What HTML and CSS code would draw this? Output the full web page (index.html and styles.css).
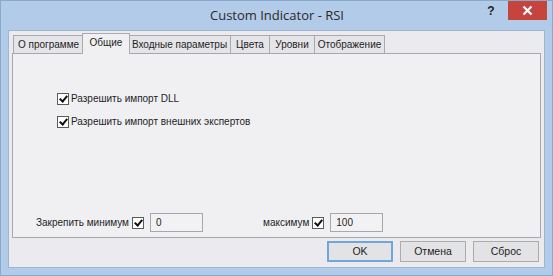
FILE: index.html
```html
<!DOCTYPE html>
<html>
<head>
<meta charset="utf-8">
<link rel="stylesheet" href="styles.css">
</head>
<body>
<div class="window">
  <div class="titlebar">
    <div class="title">Custom Indicator - RSI</div>
    <div class="help">?</div>
    <svg class="close" width="39" height="19" viewBox="0 0 39 19"><rect x="0" y="0" width="39" height="19" fill="#c7433e"/><path d="M15.5 5.5L23.5 13.5M23.5 5.5L15.5 13.5" stroke="#ffffff" stroke-width="2.2"/></svg>
  </div>
  <div class="client">
    <div class="tabs">
      <div class="tab w1">О программе</div>
      <div class="tab active w2">Общие</div>
      <div class="tab w3">Входные параметры</div>
      <div class="tab w4">Цвета</div>
      <div class="tab w5">Уровни</div>
      <div class="tab w6">Отображение</div>
    </div>
    <div class="panel">
      <div class="checks">
        <label class="check"><span class="box checked"></span>Разрешить импорт DLL</label>
        <label class="check"><span class="box checked"></span>Разрешить импорт внешних экспертов</label>
      </div>
      <div class="limits">
        <div class="limit">
          <span class="lbl">Закрепить минимум</span>
          <span class="box checked"></span>
          <span class="field">0</span>
        </div>
        <div class="limit limit-max">
          <span class="lbl">максимум</span>
          <span class="box checked"></span>
          <span class="field">100</span>
        </div>
      </div>
    </div>
    <div class="buttons">
      <div class="btn default">OK</div>
      <div class="btn">Отмена</div>
      <div class="btn">Сброс</div>
    </div>
  </div>
</div>
</body>
</html>
```

FILE: styles.css
```css
html, body {
  margin: 0;
  padding: 0;
}
body {
  width: 553px;
  height: 276px;
  overflow: hidden;
  font-family: "Liberation Sans", Arial, sans-serif;
  font-size: 10px;
  color: #1e1e1e;
}
.window {
  width: 553px;
  height: 276px;
  box-sizing: border-box;
  background: #b2cbe8;
  border: 1px solid #8aa8cc;
  display: flex;
  flex-direction: column;
}
.titlebar {
  height: 29px;
  display: flex;
  align-items: flex-start;
}
.title {
  flex: 1;
  text-align: center;
  font-family: "Open Sans", "Noto Sans", sans-serif;
  font-size: 13px;
  line-height: 29px;
  color: #2a2a2a;
  padding-left: 72px;
}
.help {
  width: 20px;
  margin-top: 3px;
  font-family: "Liberation Sans", Arial, sans-serif;
  font-weight: bold;
  font-size: 12px;
  color: #222;
  text-align: center;
  margin-right: 7px;
}
.close {
  display: block;
  flex: none;
  margin-right: 5px;
}
.client {
  flex: 1;
  margin: 0 7px 7px 7px;
  background: #ebebef;
  border: 1px solid #9fb6d2;
  display: flex;
  flex-direction: column;
  padding: 3px 3px 0 3px;
}
.tabs {
  display: flex;
  align-items: flex-end;
  height: 19px;
  padding-left: 1px;
  position: relative;
  z-index: 1;
}
.tab {
  height: 18px;
  line-height: 17px;
  box-sizing: border-box;
  border: 1px solid #aaaaae;
  border-bottom: none;
  background: #e4e4e9;
  text-align: center;
  margin-right: -1px;
  white-space: nowrap;
}
.tab.active {
  height: 21px;
  line-height: 18px;
  background: #f0f0f3;
  margin-bottom: -1px;
  margin-left: -1px;
  margin-right: -2px;
  position: relative;
  z-index: 2;
}
.w1 { width: 71px; }
.w2 { width: 48px; }
.w3 { width: 103px; }
.w4 { width: 40px; }
.w5 { width: 46px; }
.w6 { width: 71px; }
.panel {
  height: 185px;
  box-sizing: border-box;
  border: 1px solid #a9a9ad;
  background: #f0f0f3;
  display: flex;
  flex-direction: column;
  justify-content: space-between;
  padding: 38px 0 5px 23px;
}
.checks {
  display: flex;
  flex-direction: column;
  gap: 10px;
  padding-left: 21px;
}
.check {
  display: flex;
  align-items: center;
  gap: 2px;
  height: 13px;
}
.box {
  width: 12px;
  height: 12px;
  box-sizing: border-box;
  border: 1px solid #5a5a5a;
  background: #fff;
  position: relative;
  flex: none;
}
.box.checked::after {
  content: "";
  position: absolute;
  left: 3px;
  top: 0px;
  width: 3px;
  height: 6px;
  border: solid #111;
  border-width: 0 2px 2px 0;
  transform: rotate(40deg);
}
.limits {
  display: flex;
  align-items: center;
}
.limit {
  display: flex;
  align-items: center;
  gap: 3px;
}
.limit .field {
  margin-left: 3px;
  width: 53px;
  height: 19px;
  box-sizing: border-box;
  border: 1px solid #a8a8ac;
  background: #f2f2f4;
  padding-left: 5px;
  line-height: 17px;
}
.limit-max {
  margin-left: 60px;
}
.buttons {
  display: flex;
  justify-content: flex-end;
  gap: 7px;
  padding: 3px 2px 0 0;
}
.btn {
  width: 66px;
  height: 21px;
  box-sizing: border-box;
  border: 1px solid #acacac;
  background: #e3e3e6;
  text-align: center;
  line-height: 19px;
  font-size: 10.5px;
}
.btn.default {
  border: 2px solid #6fa7dc;
  line-height: 17px;
}
```
